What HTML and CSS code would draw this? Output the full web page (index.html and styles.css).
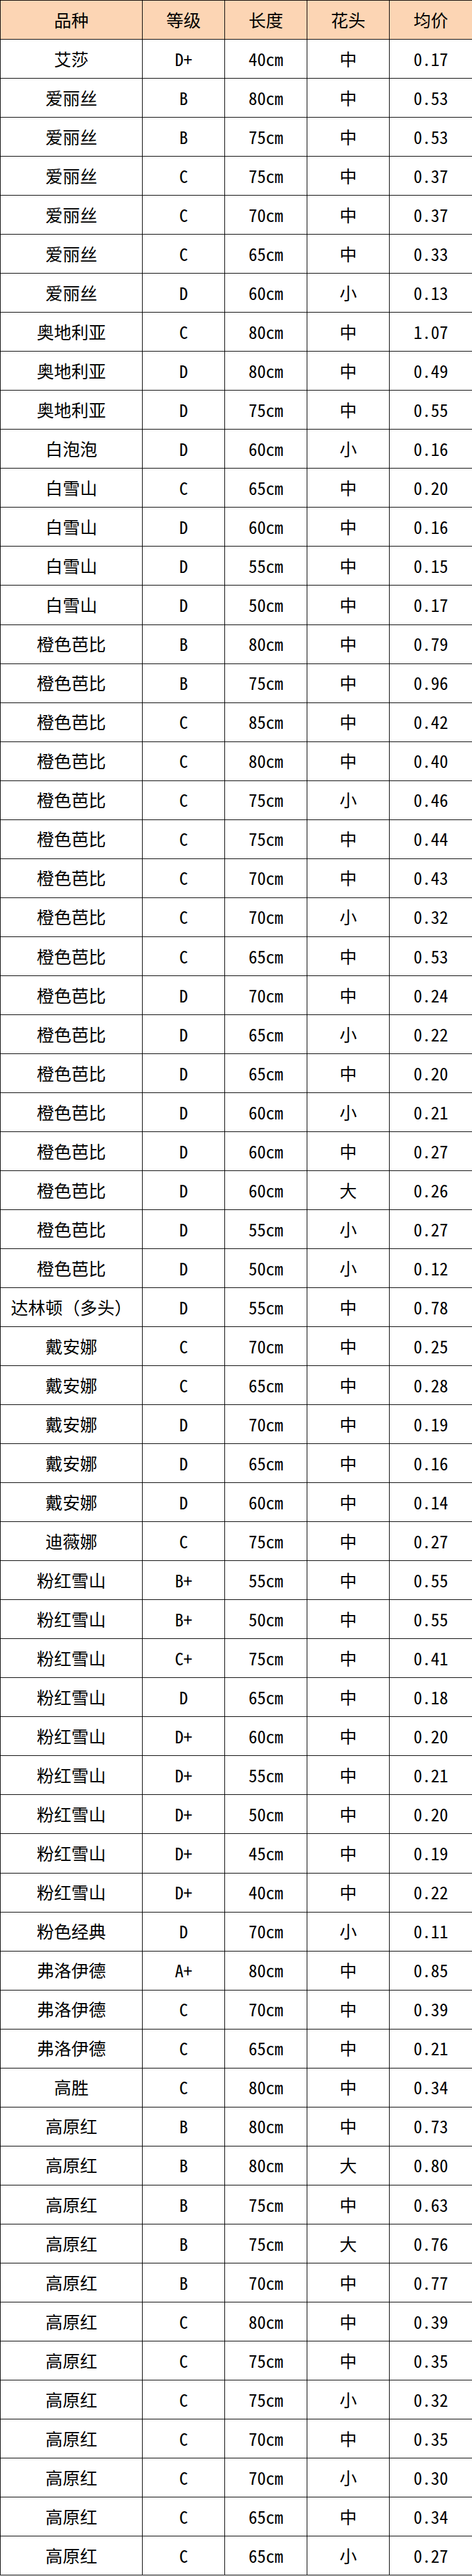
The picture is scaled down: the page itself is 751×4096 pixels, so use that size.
FILE: index.html
```html
<!DOCTYPE html>
<html lang="zh-CN">
<head>
<meta charset="utf-8">
<title>品种均价表</title>
<link rel="stylesheet" href="styles.css">
</head>
<body>
<table class="price-table">
<colgroup>
<col class="c-name"><col class="c-grade"><col class="c-len"><col class="c-head"><col class="c-price">
</colgroup>
<thead>
<tr><th>品种</th><th>等级</th><th>长度</th><th>花头</th><th>均价</th></tr>
</thead>
<tbody>
<tr><td>艾莎</td><td>D+</td><td>40cm</td><td>中</td><td>0.17</td></tr>
<tr><td>爱丽丝</td><td>B</td><td>80cm</td><td>中</td><td>0.53</td></tr>
<tr><td>爱丽丝</td><td>B</td><td>75cm</td><td>中</td><td>0.53</td></tr>
<tr><td>爱丽丝</td><td>C</td><td>75cm</td><td>中</td><td>0.37</td></tr>
<tr><td>爱丽丝</td><td>C</td><td>70cm</td><td>中</td><td>0.37</td></tr>
<tr><td>爱丽丝</td><td>C</td><td>65cm</td><td>中</td><td>0.33</td></tr>
<tr><td>爱丽丝</td><td>D</td><td>60cm</td><td>小</td><td>0.13</td></tr>
<tr><td>奥地利亚</td><td>C</td><td>80cm</td><td>中</td><td>1.07</td></tr>
<tr><td>奥地利亚</td><td>D</td><td>80cm</td><td>中</td><td>0.49</td></tr>
<tr><td>奥地利亚</td><td>D</td><td>75cm</td><td>中</td><td>0.55</td></tr>
<tr><td>白泡泡</td><td>D</td><td>60cm</td><td>小</td><td>0.16</td></tr>
<tr><td>白雪山</td><td>C</td><td>65cm</td><td>中</td><td>0.20</td></tr>
<tr><td>白雪山</td><td>D</td><td>60cm</td><td>中</td><td>0.16</td></tr>
<tr><td>白雪山</td><td>D</td><td>55cm</td><td>中</td><td>0.15</td></tr>
<tr><td>白雪山</td><td>D</td><td>50cm</td><td>中</td><td>0.17</td></tr>
<tr><td>橙色芭比</td><td>B</td><td>80cm</td><td>中</td><td>0.79</td></tr>
<tr><td>橙色芭比</td><td>B</td><td>75cm</td><td>中</td><td>0.96</td></tr>
<tr><td>橙色芭比</td><td>C</td><td>85cm</td><td>中</td><td>0.42</td></tr>
<tr><td>橙色芭比</td><td>C</td><td>80cm</td><td>中</td><td>0.40</td></tr>
<tr><td>橙色芭比</td><td>C</td><td>75cm</td><td>小</td><td>0.46</td></tr>
<tr><td>橙色芭比</td><td>C</td><td>75cm</td><td>中</td><td>0.44</td></tr>
<tr><td>橙色芭比</td><td>C</td><td>70cm</td><td>中</td><td>0.43</td></tr>
<tr><td>橙色芭比</td><td>C</td><td>70cm</td><td>小</td><td>0.32</td></tr>
<tr><td>橙色芭比</td><td>C</td><td>65cm</td><td>中</td><td>0.53</td></tr>
<tr><td>橙色芭比</td><td>D</td><td>70cm</td><td>中</td><td>0.24</td></tr>
<tr><td>橙色芭比</td><td>D</td><td>65cm</td><td>小</td><td>0.22</td></tr>
<tr><td>橙色芭比</td><td>D</td><td>65cm</td><td>中</td><td>0.20</td></tr>
<tr><td>橙色芭比</td><td>D</td><td>60cm</td><td>小</td><td>0.21</td></tr>
<tr><td>橙色芭比</td><td>D</td><td>60cm</td><td>中</td><td>0.27</td></tr>
<tr><td>橙色芭比</td><td>D</td><td>60cm</td><td>大</td><td>0.26</td></tr>
<tr><td>橙色芭比</td><td>D</td><td>55cm</td><td>小</td><td>0.27</td></tr>
<tr><td>橙色芭比</td><td>D</td><td>50cm</td><td>小</td><td>0.12</td></tr>
<tr><td>达林顿（多头）</td><td>D</td><td>55cm</td><td>中</td><td>0.78</td></tr>
<tr><td>戴安娜</td><td>C</td><td>70cm</td><td>中</td><td>0.25</td></tr>
<tr><td>戴安娜</td><td>C</td><td>65cm</td><td>中</td><td>0.28</td></tr>
<tr><td>戴安娜</td><td>D</td><td>70cm</td><td>中</td><td>0.19</td></tr>
<tr><td>戴安娜</td><td>D</td><td>65cm</td><td>中</td><td>0.16</td></tr>
<tr><td>戴安娜</td><td>D</td><td>60cm</td><td>中</td><td>0.14</td></tr>
<tr><td>迪薇娜</td><td>C</td><td>75cm</td><td>中</td><td>0.27</td></tr>
<tr><td>粉红雪山</td><td>B+</td><td>55cm</td><td>中</td><td>0.55</td></tr>
<tr><td>粉红雪山</td><td>B+</td><td>50cm</td><td>中</td><td>0.55</td></tr>
<tr><td>粉红雪山</td><td>C+</td><td>75cm</td><td>中</td><td>0.41</td></tr>
<tr><td>粉红雪山</td><td>D</td><td>65cm</td><td>中</td><td>0.18</td></tr>
<tr><td>粉红雪山</td><td>D+</td><td>60cm</td><td>中</td><td>0.20</td></tr>
<tr><td>粉红雪山</td><td>D+</td><td>55cm</td><td>中</td><td>0.21</td></tr>
<tr><td>粉红雪山</td><td>D+</td><td>50cm</td><td>中</td><td>0.20</td></tr>
<tr><td>粉红雪山</td><td>D+</td><td>45cm</td><td>中</td><td>0.19</td></tr>
<tr><td>粉红雪山</td><td>D+</td><td>40cm</td><td>中</td><td>0.22</td></tr>
<tr><td>粉色经典</td><td>D</td><td>70cm</td><td>小</td><td>0.11</td></tr>
<tr><td>弗洛伊德</td><td>A+</td><td>80cm</td><td>中</td><td>0.85</td></tr>
<tr><td>弗洛伊德</td><td>C</td><td>70cm</td><td>中</td><td>0.39</td></tr>
<tr><td>弗洛伊德</td><td>C</td><td>65cm</td><td>中</td><td>0.21</td></tr>
<tr><td>高胜</td><td>C</td><td>80cm</td><td>中</td><td>0.34</td></tr>
<tr><td>高原红</td><td>B</td><td>80cm</td><td>中</td><td>0.73</td></tr>
<tr><td>高原红</td><td>B</td><td>80cm</td><td>大</td><td>0.80</td></tr>
<tr><td>高原红</td><td>B</td><td>75cm</td><td>中</td><td>0.63</td></tr>
<tr><td>高原红</td><td>B</td><td>75cm</td><td>大</td><td>0.76</td></tr>
<tr><td>高原红</td><td>B</td><td>70cm</td><td>中</td><td>0.77</td></tr>
<tr><td>高原红</td><td>C</td><td>80cm</td><td>中</td><td>0.39</td></tr>
<tr><td>高原红</td><td>C</td><td>75cm</td><td>中</td><td>0.35</td></tr>
<tr><td>高原红</td><td>C</td><td>75cm</td><td>小</td><td>0.32</td></tr>
<tr><td>高原红</td><td>C</td><td>70cm</td><td>中</td><td>0.35</td></tr>
<tr><td>高原红</td><td>C</td><td>70cm</td><td>小</td><td>0.30</td></tr>
<tr><td>高原红</td><td>C</td><td>65cm</td><td>中</td><td>0.34</td></tr>
<tr><td>高原红</td><td>C</td><td>65cm</td><td>小</td><td>0.27</td></tr>
</tbody>
</table>
</body>
</html>
```

FILE: styles.css
```css
html, body {
  margin: 0;
  padding: 0;
  background: #ffffff;
}

body {
  font-family: "Noto Sans Mono CJK SC", "Noto Sans CJK SC", "DejaVu Sans", sans-serif;
  color: #000000;
}

.price-table {
  width: 751px;
  table-layout: fixed;
  border-collapse: collapse;
  border-spacing: 0;
}

.c-name { width: 226px; }
.c-grade { width: 131px; }
.c-len { width: 131px; }
.c-head { width: 131px; }
.c-price { width: 132px; }

.price-table tr {
  height: 62.04px;
}

.price-table th,
.price-table td {
  border: 1.5px solid #000000;
  padding: 0;
  text-align: center;
  vertical-align: middle;
  font-size: 27.5px;
  font-weight: normal;
  line-height: 1;
  white-space: nowrap;
}

.price-table th {
  background: #fcd5b4;
}
```
